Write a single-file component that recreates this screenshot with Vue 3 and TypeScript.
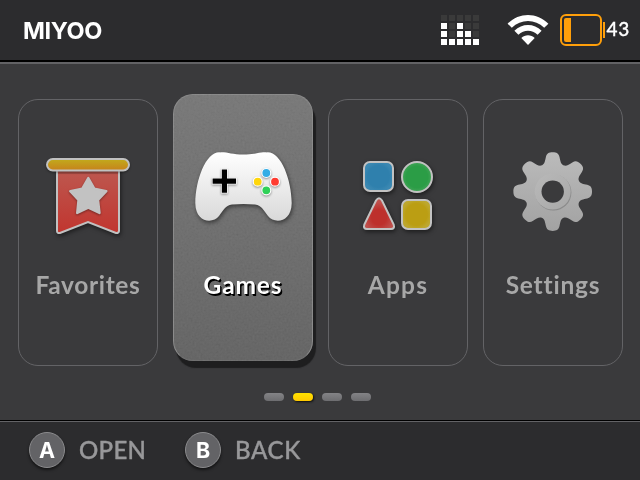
<script setup lang="ts">
interface MenuItem {
  id: string
  label: string
}

const items: MenuItem[] = [
  { id: 'favorites', label: 'Favorites' },
  { id: 'games', label: 'Games' },
  { id: 'apps', label: 'Apps' },
  { id: 'settings', label: 'Settings' },
]
const selected = 'games'

const hints = [
  { key: 'A', action: 'OPEN' },
  { key: 'B', action: 'BACK' },
]

const meter = ['00000', '10100', '10110', '11111'].join('').split('').map((c) => c === '1')

// Gear outline: one tooth, repeated around the centre
function gearPath(cx: number, cy: number, teeth: number): string {
  const tooth = [
    [-10.9, -26.2], [-8, -27.4], [-7.7, -30.5], [-6.8, -34.5],
    [-5.9, -38.2], [-4, -39.3], [0, -39.3],
    [4, -39.3], [5.9, -38.2], [6.8, -34.5],
    [7.7, -30.5], [8, -27.4], [10.9, -26.2],
  ]
  let d = ''
  for (let i = 0; i < teeth; i++) {
    const a = (i * 2 * Math.PI) / teeth
    const p = tooth.map(([x, y]) =>
      `${(cx + x * Math.cos(a) - y * Math.sin(a)).toFixed(2)} ${(cy + x * Math.sin(a) + y * Math.cos(a)).toFixed(2)}`)
    d += `${i === 0 ? 'M' : 'L'}${p[0]}C${p.slice(1).join(' ')}`
  }
  return d + 'Z'
}
const gear = gearPath(69.7, 92.6, 8)
</script>

<template>
  <div class="screen">
    <header class="top">
      <h1 class="brand">MIYOO</h1>
      <div class="status">
        <div class="meter">
          <i v-for="(on, i) in meter" :key="i" :class="{ on }"></i>
        </div>
        <svg class="wifi" width="42" height="32" viewBox="0 0 42 32">
          <path d="M0.6 9.700C12-2 30-2 41.400 9.700L37.200 13.700C28 4.900 14 4.900 4.800 13.700Z" />
          <path d="M7.400 16.700C15 9 27 9 34.600 16.700L30.600 20.700C25 15.500 17 15.500 11.400 20.700Z" />
          <path d="M14.300 23.900C18 20.200 24 20.200 27.700 23.900L21 31Z" />
        </svg>
        <div class="battery"><i class="level"></i></div>
        <i class="nub"></i>
        <span class="percent">43</span>
      </div>
    </header>

    <main class="stage">
      <nav class="cards">
        <section v-for="item in items" :key="item.id" class="card" :class="{ active: item.id === selected }">
          <svg v-if="item.id === selected" class="grain" width="140" height="267">
            <filter id="grain" x="0" y="0" width="100%" height="100%">
              <feTurbulence type="fractalNoise" baseFrequency="0.5" numOctaves="2" seed="4" />
              <feColorMatrix values="0.5 0.5 0 0 0  0.5 0.5 0 0 0  0.5 0.5 0 0 0  0 0 0 0 1" />
            </filter>
            <rect width="140" height="267" filter="url(#grain)" />
          </svg>
          <svg class="icon" width="140" height="150" viewBox="0 0 140 150">
            <g v-if="item.id === 'favorites'">
              <defs>
                <linearGradient id="rod" x2="0" y2="1"><stop stop-color="#c1ab1c" /><stop offset="1" stop-color="#c7821b" /></linearGradient>
                <linearGradient id="cloth" x2="0" y2="1"><stop stop-color="#bd5a51" /><stop offset="1" stop-color="#c1352f" /></linearGradient>
              </defs>
              <path class="shade" d="M39 67H101V132Q100.500 134.500 98 134L70 123L42 134Q39 134.500 39 132Z" fill="url(#cloth)" stroke="#c1c1c1" stroke-width="2" />
              <path d="M40 72H100V75H40Z" fill="#000" opacity=".13" />
              <rect class="shade-soft" x="29" y="60" width="82" height="11.500" rx="5.750" fill="url(#rod)" stroke="#c1c1c1" stroke-width="2" />
              <path class="shade-soft" d="M70.300 79L76.300 89.700L88.300 92.200L80 101L81.500 114L70.300 108.700L59.200 114L60.500 101L52.300 92.200L64.300 89.700Z" fill="#c2c2c2" stroke="#c2c2c2" stroke-width="2.400" stroke-linejoin="round" />
            </g>
            <g v-else-if="item.id === 'games'">
              <defs>
                <linearGradient id="pad" x2="0" y2="1"><stop stop-color="#ffffff" /><stop offset="1" stop-color="#d9d9d9" /></linearGradient>
              </defs>
              <path class="shade" d="M47 53.400C54 52.900 59 55.600 70.500 55.600C82 55.600 87 52.900 94 53.400C108 52.400 118.500 81 118.700 104C118.500 124 101 125 95 117C91 112 89 106.500 82 105.500Q70.500 104.500 59 105.500C52 106.500 50 112 46 117C40 125 22.500 124 22.300 104C22.500 81 33 52.400 47 53.400Z" fill="url(#pad)" />
              <path class="shade-soft" d="M48.800 70.500H54V79.400H63V84.800H54V93.700H48.800V84.800H39.600V79.400H48.800Z" fill="#000" stroke="#fff" stroke-width="1.400" paint-order="stroke" />
              <g class="shade-soft" stroke="#fff" stroke-width="1.200">
                <circle cx="93.300" cy="74" r="4.500" fill="#32ade6" />
                <circle cx="84.700" cy="82.700" r="4.500" fill="#ffd60a" />
                <circle cx="102" cy="82.700" r="4.500" fill="#ff3b30" />
                <circle cx="93.300" cy="91.300" r="4.500" fill="#30d158" />
              </g>
            </g>
            <g v-else-if="item.id === 'apps'" stroke="#c2c2c2" stroke-width="2">
              <defs>
                <radialGradient id="blue"><stop offset=".75" stop-color="#2f80ad" /><stop offset="1" stop-color="#3b88b2" /></radialGradient>
                <radialGradient id="green"><stop offset=".72" stop-color="#2b9d46" /><stop offset="1" stop-color="#44a459" /></radialGradient>
                <radialGradient id="red" cy=".62"><stop offset=".5" stop-color="#bd302c" /><stop offset="1" stop-color="#bf514d" /></radialGradient>
                <radialGradient id="gold"><stop offset=".75" stop-color="#bb9e13" /><stop offset="1" stop-color="#bda72e" /></radialGradient>
              </defs>
              <rect class="shade" x="36" y="63" width="29" height="29" rx="6" fill="url(#blue)" />
              <circle class="shade" cx="89" cy="78" r="15" fill="url(#green)" />
              <path class="shade" d="M48 101.500Q51 97 54 101.500L65.700 125.500Q67 130 63 130H39Q35 130 36.300 125.500Z" fill="url(#red)" />
              <rect class="shade" x="74" y="101" width="29" height="29" rx="6" fill="url(#gold)" />
            </g>
            <g v-else>
              <defs>
                <linearGradient id="steel" x2="0" y2="1"><stop stop-color="#bbbbbb" /><stop offset="1" stop-color="#a2a2a2" /></linearGradient>
                <linearGradient id="hub" x2="1" y2="1"><stop stop-color="#b9b9b9" /><stop offset="1" stop-color="#a8a8a8" /></linearGradient>
              </defs>
              <path :d="gear" fill="url(#steel)" />
              <circle cx="70.400" cy="93.500" r="18" fill="#808080" opacity=".75" />
              <circle cx="69.700" cy="92.600" r="18" fill="url(#hub)" />
              <circle cx="69.700" cy="92.600" r="11.200" fill="#3a3a3c" />
            </g>
          </svg>
          <span class="label" :class="item.id">{{ item.label }}</span>
        </section>
      </nav>
      <div class="pager">
        <i v-for="item in items" :key="item.id" :class="{ current: item.id === selected }"></i>
      </div>
    </main>

    <footer class="bottom">
      <div v-for="hint in hints" :key="hint.key" class="hint">
        <span class="key">{{ hint.key }}</span>
        <span class="action" :class="hint.action.toLowerCase()">{{ hint.action }}</span>
      </div>
    </footer>
  </div>
</template>

<style>
body {
  margin: 0;
  background: #3a3a3c;
}
</style>

<style scoped>
.screen {
  width: 640px;
  height: 480px;
  display: flex;
  flex-direction: column;
  overflow: hidden;
  background: #3a3a3c;
  font-family: Lato, "Noto Sans", sans-serif;
}
.top {
  height: 60px;
  flex: none;
  display: flex;
  justify-content: space-between;
  background: #2c2c2e;
  border-bottom: 2px solid #000;
  box-shadow: 0 2px 0 #626265;
}
.brand {
  margin: 0;
  padding-left: 23px;
  font: 700 23.500px/62px Inter, sans-serif;
  letter-spacing: -0.400px;
  color: #fff;
}
.status {
  display: flex;
  width: 199px;
  padding-top: 14px;
}
.meter {
  display: grid;
  grid-template-columns: repeat(5, 6px);
  grid-template-rows: repeat(4, 6px);
  gap: 2px;
  margin-top: 1px;
}
.meter i {
  background: #3a3a3a;
}
.meter i.on {
  background: #fff;
}
.wifi {
  margin-left: 27.500px;
  flex: none;
  fill: #fff;
}
.battery {
  box-sizing: border-box;
  flex: none;
  width: 42px;
  height: 32px;
  margin-left: 11.500px;
  padding: 2px;
  border: 2px solid #ff9f0a;
  border-radius: 6px;
}
.level {
  display: block;
  width: 7px;
  height: 24px;
  background: #ff9f0a;
  border-radius: 2px 0 0 2px;
}
.nub {
  width: 2px;
  height: 16px;
  margin: 8px 0 0 1px;
  background: #ff9f0a;
}
.percent {
  margin-left: 1.500px;
  color: #fff;
  font: 500 19px/30px Lato, sans-serif;
  letter-spacing: 0.700px;
  -webkit-text-stroke: 0.300px #fff;
}
.stage {
  height: 358px;
  flex: none;
}
.cards {
  display: flex;
  gap: 15px;
  padding: 37px 17px 0 18px;
}
.card {
  box-sizing: border-box;
  width: 140px;
  height: 267px;
  flex: none;
  display: flex;
  flex-direction: column;
  align-items: center;
  border: 1px solid #636366;
  border-radius: 20px;
  color: #a7a7a7;
}
.icon {
  margin: -1px;
  flex: none;
}
.card.active {
  position: relative;
  margin-top: -5px;
  padding-top: 5px;
  border-color: #858585;
  border-bottom-color: #6a6a6a;
  background: linear-gradient(#747474, #606060);
  background-origin: border-box;
  box-shadow: 3px 7px 1px #1e1e1f;
  color: #fff;
}
.grain {
  position: absolute;
  top: -1px;
  left: -1px;
  border-radius: 20px;
  opacity: 0.22;
  mix-blend-mode: soft-light;
}
.active .icon {
  position: relative;
}
.label {
  position: relative;
  margin-top: 22px;
  font-size: 24.500px;
  line-height: 30px;
  font-weight: 700;
  white-space: nowrap;
}
.favorites {
  letter-spacing: 0.650px;
}
.games {
  letter-spacing: 0.850px;
}
.apps {
  letter-spacing: 1.200px;
}
.settings {
  letter-spacing: 0.800px;
}
.active .label {
  text-shadow: 1px 1px 0 #000, 1.500px 1.500px 0 #000;
}
.shade {
  filter: drop-shadow(1px 2px 2px rgba(0, 0, 0, 0.5));
}
.shade-soft {
  filter: drop-shadow(0 1px 1px rgba(0, 0, 0, 0.4));
}
.pager {
  display: flex;
  gap: 9px;
  padding: 27px 0 0 264px;
}
.pager i {
  width: 20px;
  height: 8px;
  border-radius: 4px;
  background: linear-gradient(#838386, #6d6d70);
}
.pager .current {
  background: linear-gradient(#ffe100, #ffc900);
  box-shadow: 1px 1px 2px #111;
}
.bottom {
  box-sizing: border-box;
  height: 60px;
  flex: none;
  display: flex;
  padding: 10px 29px;
  background: #2c2c2e;
  border-top: 1px solid #000;
  box-shadow: inset 0 1px 0 #636366;
}
.hint {
  width: 156px;
  display: flex;
}
.key {
  box-sizing: border-box;
  width: 36px;
  height: 36px;
  margin-top: 1px;
  border: 1px solid #8b8b8d;
  border-radius: 50%;
  background: #636366;
  box-shadow: 0 2px 3px rgba(0, 0, 0, 0.55);
  color: #fff;
  font: 700 21.500px/35px Inter, sans-serif;
  text-align: center;
}
.action {
  margin-left: 14px;
  color: #98989a;
  font-size: 24px;
  font-weight: 500;
  line-height: 37px;
  -webkit-text-stroke: 0.400px #98989a;
}
.open {
  letter-spacing: 0.300px;
}
.back {
  letter-spacing: 0.700px;
}
</style>
